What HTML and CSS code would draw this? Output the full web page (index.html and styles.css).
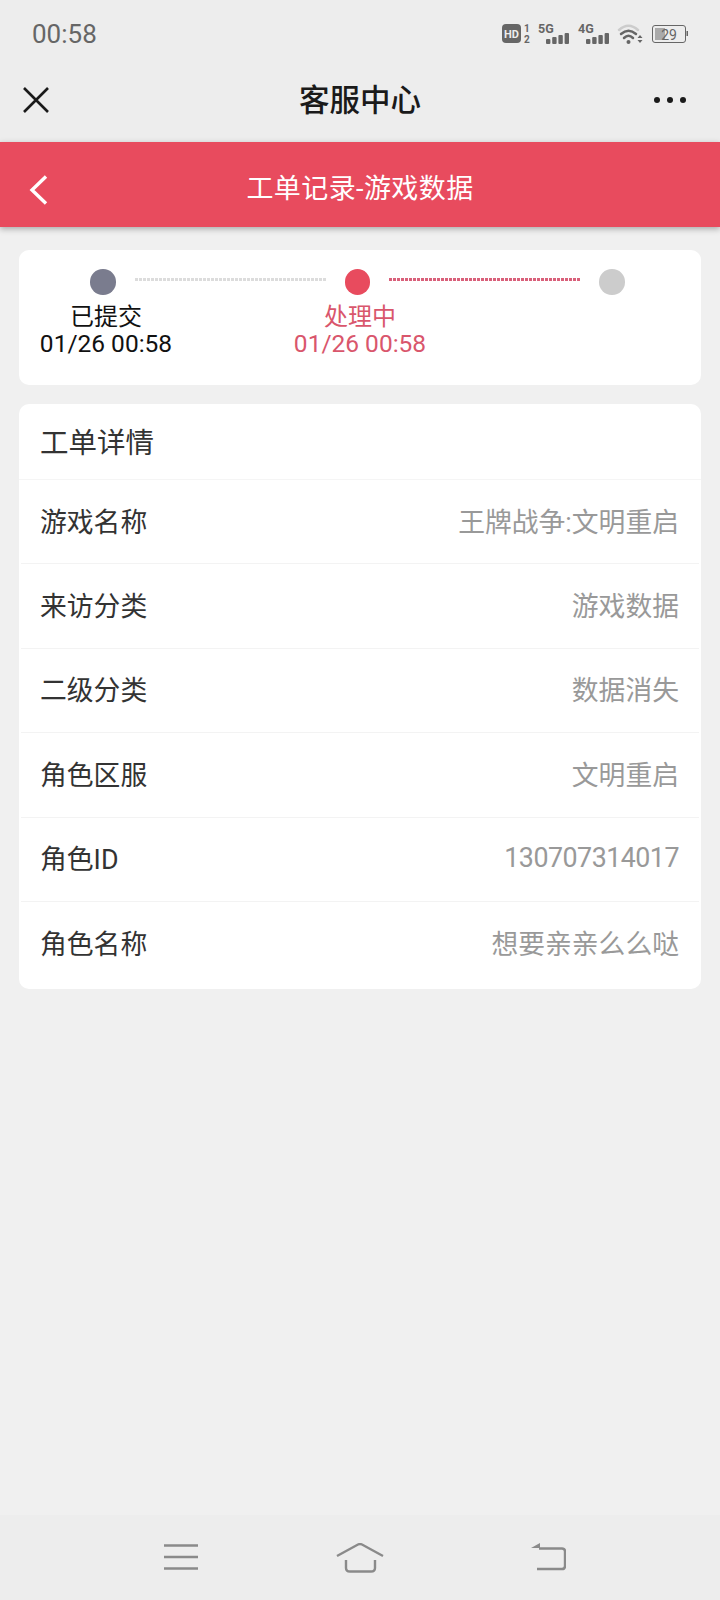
FILE: index.html
```html
<!DOCTYPE html>
<html lang="zh-CN">
  <head>
    <meta charset="UTF-8" />
    <meta name="viewport" content="width=device-width, initial-scale=1.0" />
    <title>客服中心</title>
    <link rel="stylesheet" href="styles.css">
  </head>
  <body>
    <div class="status-bar">
      <span class="status-bar__time">00:58</span>
      <svg class="status-bar__icons" width="188" height="24" viewBox="0 0 188 24">
        <!-- HD badge -->
        <rect x="2" y="2" width="19" height="19" rx="4" fill="#666" />
        <text x="11.5" y="16" class="ic-hd">HD</text>
        <text x="24" y="9.5" class="ic-sim">1</text>
        <text x="24" y="21" class="ic-sim">2</text>
        <!-- SIM 1 -->
        <text x="38" y="11" class="ic-sm">5G</text>
        <g fill="#666">
          <rect x="46" y="17" width="4.4" height="5" rx="1" />
          <rect x="52.2" y="15" width="4.4" height="7" rx="1" />
          <rect x="58.4" y="13" width="4.4" height="9" rx="1" />
          <rect x="64.6" y="11" width="4.4" height="11" rx="1" />
        </g>
        <!-- SIM 2 -->
        <text x="78" y="11" class="ic-sm">4G</text>
        <g fill="#666">
          <rect x="86" y="17" width="4.4" height="5" rx="1" />
          <rect x="92.2" y="15" width="4.4" height="7" rx="1" />
          <rect x="98.4" y="13" width="4.4" height="9" rx="1" />
          <rect x="104.6" y="11" width="4.4" height="11" rx="1" />
        </g>
        <!-- wifi -->
        <g fill="none" stroke-linecap="round">
          <path d="M119 8 Q128.5 -0.5 138 8" stroke="#ccc" stroke-width="2.5" />
          <path d="M121 12 Q128.5 5.5 136 12" stroke="#666" stroke-width="2.5" />
          <path d="M124 16 Q128.5 11.5 133 16" stroke="#666" stroke-width="2.5" />
        </g>
        <circle cx="128.5" cy="20" r="2" fill="#666" />
        <path d="M140 13 l2.5 3 h-5 z M140 21 l2.5 -3 h-5 z" fill="#666" />
        <!-- battery -->
        <rect x="152.5" y="3.5" width="33" height="17" rx="2.5" fill="none" stroke="#666" />
        <rect x="155" y="6" width="10" height="12" fill="#aaa" />
        <rect x="186.5" y="9" width="1.5" height="5" fill="#666" />
        <text x="169" y="17.5" class="ic-batt">29</text>
      </svg>
    </div>

    <nav class="nav-bar">
      <svg class="nav-bar__close" width="26" height="26" viewBox="0 0 26 26">
        <path d="M1 1 L25 25 M25 1 L1 25" stroke="#1a1a1a" stroke-width="2.6" fill="none" />
      </svg>
      <span class="nav-bar__title">客服中心</span>
      <span class="nav-bar__more"><i></i><i></i><i></i></span>
    </nav>

    <header class="page-header">
      <svg class="page-header__back" width="20" height="30" viewBox="0 0 20 30">
        <path d="M17 1.5 L3 15 L17 28.5" stroke="#fff" stroke-width="3.4" fill="none" />
      </svg>
      <h1>工单记录-游戏数据</h1>
    </header>

    <main class="content">
      <section class="card steps">
        <div class="steps__track">
          <span class="dot dot--done"></span>
          <span class="line line--grey"></span>
          <span class="dot dot--active"></span>
          <span class="line line--red"></span>
          <span class="dot dot--todo"></span>
        </div>
        <div class="steps__labels">
          <div class="step-label">
            <div>已提交</div>
            <div class="step-label__time">01/26 00:58</div>
          </div>
          <div class="step-label step-label--active">
            <div>处理中</div>
            <div class="step-label__time">01/26 00:58</div>
          </div>
        </div>
      </section>

      <section class="card details">
        <h2 class="details__title">工单详情</h2>
        <div class="row"><span>游戏名称</span><span class="row__value">王牌战争:文明重启</span></div>
        <div class="row"><span>来访分类</span><span class="row__value">游戏数据</span></div>
        <div class="row"><span>二级分类</span><span class="row__value">数据消失</span></div>
        <div class="row"><span>角色区服</span><span class="row__value">文明重启</span></div>
        <div class="row"><span>角色ID</span><span class="row__value row__value--num">130707314017</span></div>
        <div class="row row--last"><span>角色名称</span><span class="row__value">想要亲亲么么哒</span></div>
      </section>
    </main>

    <footer class="sys-nav">
      <svg class="sys-nav__menu" width="34" height="26" viewBox="0 0 34 26">
        <path d="M0 1.5 H34 M0 13 H34 M0 24.5 H34" stroke="#8a8a8a" stroke-width="2.4" fill="none" />
      </svg>
      <svg class="sys-nav__home" width="48" height="30" viewBox="0 0 48 30">
        <path d="M1 13 L22 1.5 Q24 .6 26 1.5 L47 13" stroke="#8a8a8a" stroke-width="2.4" fill="none" />
        <path d="M10 17 V25 Q10 28.5 14 28.5 H35 Q39 28.5 39 25 V17" stroke="#8a8a8a" stroke-width="2.4" fill="none" />
      </svg>
      <svg class="sys-nav__back" width="35" height="28" viewBox="0 0 35 28">
        <path d="M0 5 L9 0 V5 Z" fill="#8a8a8a" />
        <path d="M8 5.5 H31 Q34 5.5 34 8.5 V23 Q34 26 31 26 H6" stroke="#8a8a8a" stroke-width="2.4" fill="none" />
      </svg>
    </footer>
  </body>
</html>
```

FILE: styles.css
```css
/* Global styles */
* {
  padding: 0;
  margin: 0;
  box-sizing: border-box;
}

:root {
  --barColor: #ededed;
  --backgroundColor: #f0f0f0;
  --primaryColor: #e84b5e;
  --textColor: #333333;
  --mutedColor: #999999;
}

body {
  height: 100vh;
  display: flex;
  flex-direction: column;
  background-color: var(--backgroundColor);
  font-family: Roboto, "Noto Sans CJK SC", sans-serif;
}

/* Status bar */
.status-bar {
  height: 62px;
  padding: 6px 32px 0 32px;
  display: flex;
  justify-content: space-between;
  align-items: center;
  background-color: var(--barColor);
}

.status-bar__time {
  font-size: 26px;
  color: #666666;
}

.status-bar__icons {
  overflow: visible;
}

.status-bar__icons text {
  font-family: Roboto, sans-serif;
  fill: #666666;
  font-weight: 700;
}

.status-bar__icons .ic-hd {
  font-size: 11px;
  fill: #ededed;
  text-anchor: middle;
}

.status-bar__icons .ic-sm {
  font-size: 12.5px;
}

.status-bar__icons .ic-sim {
  font-size: 10px;
}

.status-bar__icons .ic-batt {
  font-size: 14px;
  font-weight: 400;
  text-anchor: middle;
}

/* Title bar */
.nav-bar {
  height: 80px;
  padding: 0 23px 4px;
  display: grid;
  grid-template-columns: 1fr auto 1fr;
  align-items: center;
  background-color: var(--barColor);
}

.nav-bar__title {
  padding-bottom: 4px;
  font-size: 30.5px;
  font-weight: 500;
  color: #1a1a1a;
}

.nav-bar__more {
  justify-self: end;
  margin-right: 11px;
  display: flex;
  gap: 6.5px;
}

.nav-bar__more i {
  width: 6.5px;
  height: 6.5px;
  border-radius: 50%;
  background-color: #1a1a1a;
}

/* Red header */
.page-header {
  position: relative;
  height: 85px;
  padding-top: 3px;
  display: flex;
  justify-content: center;
  align-items: center;
  background-color: var(--primaryColor);
  box-shadow: 0 2px 6px rgba(0, 0, 0, 0.3);
}

.page-header__back {
  position: absolute;
  left: 29px;
  top: 33px;
}

.page-header h1 {
  font-size: 27px;
  font-weight: 400;
  letter-spacing: 0.4px;
  color: #ffffff;
}

/* Cards */
.content {
  flex: 1;
  padding: 23px 19px 0;
  display: flex;
  flex-direction: column;
  gap: 19px;
}

.card {
  background-color: #ffffff;
  border-radius: 10px;
}

/* Progress steps */
.steps {
  height: 135px;
  padding-top: 19px;
}

.steps__track {
  padding-left: 71px;
  display: flex;
}

.dot {
  width: 25.5px;
  height: 25.5px;
  border-radius: 50%;
}

.dot--done {
  background-color: #7a7c8e;
}

.dot--active {
  background-color: var(--primaryColor);
}

.dot--todo {
  background-color: #cccccc;
}

.line {
  width: 191.5px;
  height: 3px;
  margin: 9px 18.5px 0 19px;
}

.line--grey {
  background: repeating-linear-gradient(90deg, #dcdcdc 0 3px, #ffffff 3px 4px);
}

.line--red {
  background: repeating-linear-gradient(90deg, #d9607a 0 3px, #ffffff 3px 4px);
}

.steps__labels {
  margin-top: 8px;
  padding-left: 7px;
  display: flex;
  gap: 94px;
}

.step-label {
  width: 160px;
  text-align: center;
  font-size: 24px;
  line-height: 28px;
  color: #111111;
}

.step-label__time {
  font-size: 24.5px;
  margin-top: -1px;
}

.step-label--active {
  color: #d9566c;
}

/* Details */
.details__title {
  height: 76px;
  padding: 0 0 3px 21px;
  display: flex;
  align-items: center;
  font-size: 28.5px;
  font-weight: 400;
  color: var(--textColor);
  border-bottom: 1px solid #f5f5f5;
}

.row {
  height: 84.4px;
  margin: 0 2px;
  padding: 0 20px 3px 19px;
  display: flex;
  justify-content: space-between;
  align-items: center;
  font-size: 26.8px;
  color: var(--textColor);
  border-bottom: 1px solid #f3f3f3;
}

.row--last {
  height: 87px;
  padding-bottom: 6px;
  border-bottom: 0;
}

.row__value {
  color: var(--mutedColor);
}

.row__value--num {
  letter-spacing: -0.5px;
}

/* System navigation */
.sys-nav {
  height: 85px;
  padding: 29px 0 0 164px;
  display: flex;
  align-items: flex-start;
  background-color: var(--barColor);
}

.sys-nav__home {
  margin: -1px 0 0 138px;
}

.sys-nav__back {
  margin: -1px 0 0 147px;
}
```
